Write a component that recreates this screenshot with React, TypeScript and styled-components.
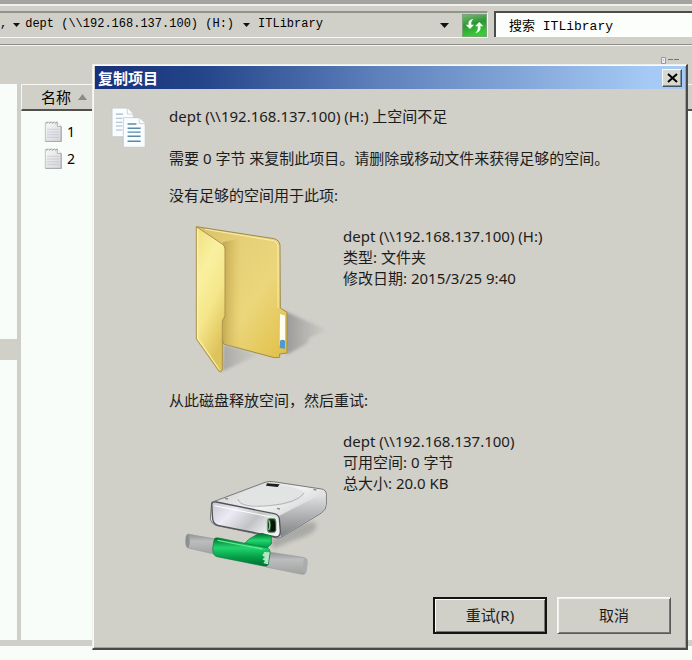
import React from "react";
import styled, { createGlobalStyle } from "styled-components";

const face = "#d0cfc8";
const paper = "#f9fdf9";
const uiFont = '"Noto Sans", "Noto Sans CJK SC", sans-serif';
const monoFont = '"Liberation Mono", "Noto Sans CJK SC", monospace';

const GlobalStyle = createGlobalStyle`
  * { box-sizing: border-box; }
  body { margin: 0; background: ${paper}; color: #1c1c1c; font-family: ${uiFont}; font-size: 15px; }
  p, h1, h2, ul { margin: 0; padding: 0; font: inherit; }
  button, input { font: inherit; color: inherit; }
`;

const Explorer = styled.div`
  position: relative;
  display: flex;
  flex-direction: column;
  min-height: 100vh;
  padding-bottom: 14px;
  overflow: hidden;
`;

const TopBar = styled.header`
  display: flex;
  gap: 6px;
  height: 46px;
  padding: 5px 0 7px;
  background: ${face};
  border-top: 4px solid #a3a3a0;
  border-bottom: 1px solid #f4f4f0;
  box-shadow: inset 0 2px #f0f0ec, inset 0 -1px #8e8e8a;
`;

const AddressBar = styled.nav`
  flex: 1 1 488px;
  display: flex;
  align-items: center;
  margin-top: 2px;
  height: 27px;
  border-top: 2px solid #92928e;
  border-bottom: 1px solid #f6f6f2;
  border-right: 1px solid #f6f6f2;
  font: 12px/20px ${monoFont};
  color: #000;
  white-space: pre;
`;

const Crumb = styled.button`
  padding: 0 0 2px;
  border: 0;
  background: none;
`;

const arrowWidths = { narrow: "18px", normal: "24px", wide: "36px" };

const ArrowButton = styled.button<{ $size: keyof typeof arrowWidths }>`
  display: flex;
  justify-content: center;
  align-items: center;
  width: ${(p) => arrowWidths[p.$size]};
  margin-left: ${(p) => (p.$size === "wide" ? "auto" : "0")};
  padding: 0;
  border: 0;
  background: none;
`;

const RefreshButton = styled.button`
  flex: none;
  display: flex;
  width: 25px;
  height: 23px;
  padding: 0;
  border: 1px solid #76a676;
  background: none;
`;

const SearchBox = styled.input`
  flex: 1 1 198px;
  min-width: 0;
  height: 26px;
  margin-top: 2px;
  padding: 0 0 2px 13px;
  border: 0;
  border-top: 2px solid #4c4c4c;
  border-left: 2px solid #4c4c4c;
  border-radius: 0;
  background: #fcfefc;
  font: 13px/22px ${monoFont};
  color: #000;
  outline: 0;
`;

const CommandBar = styled.div`
  display: flex;
  justify-content: flex-end;
  height: 38px;
  padding: 10px 12px 0 0;
  background: ${face};
`;

const Panes = styled.main`
  flex: 1;
  display: grid;
  grid-template-columns: 17px 1fr;
  gap: 4px;
  background: #cfcfca;
  border-bottom: 6px solid #cfcec8;
`;

const TreePane = styled.aside`
  background: ${paper};
`;

const TreeSelection = styled.div`
  height: 21px;
  margin-top: 255px;
  background: ${face};
`;

const ListPane = styled.section`
  background: ${paper};
`;

const ColumnHeader = styled.button`
  display: flex;
  align-items: center;
  gap: 7px;
  width: 100%;
  height: 27px;
  padding: 0 0 0 19px;
  border: 0;
  border-top: 1px solid #f6f6f2;
  border-left: 1px solid #f6f6f2;
  border-bottom: 2px solid #50504e;
  background: ${face};
  font-size: 15px;
  line-height: 22px;
  color: #000;
`;

const FileList = styled.ul`
  padding: 7px 0 0 23px;
  list-style: none;
`;

const FileRow = styled.li`
  display: flex;
  align-items: center;
  gap: 5px;
  height: 27px;
  font-size: 14px;
  line-height: 20px;
  color: #000;
`;

const Dialog = styled.section`
  position: absolute;
  top: 64px;
  left: 92px;
  right: 4px;
  border: 1px solid #efefeb;
  border-right: 2px solid #4a4a4a;
  border-bottom: 2px solid #4a4a4a;
  background: ${face};
  padding: 1px;
  box-shadow: inset 1px 1px #fafafa, inset -1px -1px #a0a09c;
`;

const TitleBar = styled.header`
  display: flex;
  align-items: center;
  justify-content: space-between;
  height: 23px;
  margin-left: 1px;
  padding: 0 3px;
  background: linear-gradient(90deg, #17307a, #24458a 18%, #5e80bb 48%, #a6caf5 94%);
  color: #fff;
`;

const Title = styled.h1`
  font-size: 15px;
  font-weight: 700;
  line-height: 22px;
`;

const CloseButton = styled.button`
  display: flex;
  align-items: center;
  justify-content: center;
  width: 20px;
  height: 18px;
  padding: 0;
  border: 1px solid;
  border-color: #f8f8f4 #43505c #43505c #f8f8f4;
  box-shadow: inset -1px -1px #85929a;
  background: #d7d8d0;
`;

const Message = styled.div`
  display: grid;
  grid-template-columns: 58px 1fr;
  padding: 17px 14px 0 17px;
  line-height: 21px;
`;

const Intro = styled.div`
  display: flex;
  flex-direction: column;
  gap: 21px;
  margin-bottom: 16px;
`;

const Item = styled.section`
  & + & { margin-top: 4px; }
`;

const ItemBody = styled.div`
  display: grid;
  grid-template-columns: 174px 1fr;
  margin-top: 10px;
`;

const Details = styled.div`
  padding-top: 10px;
`;

const Footer = styled.footer`
  display: flex;
  justify-content: flex-end;
  gap: 10px;
  padding: 6px 14px 13px;
`;

const PushButton = styled.button<{ $default?: boolean }>`
  width: 114px;
  height: 37px;
  padding: 0;
  border: ${(p) => (p.$default ? "2px solid #141414" : "1px solid")};
  ${(p) => !p.$default && "border-color: #fafaf6 #5a5a58 #5a5a58 #fafaf6;"}
  box-shadow: ${(p) => (p.$default ? "inset 1px 1px #fafaf6, inset -1px -1px #777772" : "inset 1px 1px #f0f0ec, inset -1px -1px #777772")};
  background: ${face};
  line-height: 21px;
`;

const Triangle = () => (
  <svg width="9" height="5" viewBox="0 0 9 5" aria-hidden="true"><path d="M0 0h9L4.500 5z" fill="#111" /></svg>
);

const SmallTriangle = () => (
  <svg width="7" height="4" viewBox="0 0 7 4" aria-hidden="true"><path d="M0 0h7L3.500 4z" fill="#111" /></svg>
);

const RefreshIcon = () => (
  <svg width="23" height="21" viewBox="0 0 69 63" aria-hidden="true">
    <defs>
      <linearGradient id="refresh" x2="0.300" y2="1">
        <stop stopColor="#75b873" /><stop offset=".5" stopColor="#2e9636" /><stop offset="1" stopColor="#36cb34" />
      </linearGradient>
    </defs>
    <rect width="69" height="63" fill="url(#refresh)" />
    <path d="M31 12C19 13 15 21 17 29H8l13 13 12-13h-8c-1-7 1-12 6-17z" fill="#f5fff3" />
    <path d="M37 54c12-1 18-10 15-20h9L49 21 36 34h8c2 8-1 14-7 20z" fill="#f5fff3" />
  </svg>
);

const ViewIcon = () => (
  <svg width="20" height="9" viewBox="0 0 20 9" aria-hidden="true">
    <path d="M1.500 1.500h4v6h-4zM3 4h1" fill="#e8eef0" stroke="#929da0" />
    <path d="M8 3.500h5M14 3.500h5" stroke="#737675" />
  </svg>
);

const SheetIcon = () => (
  <svg width="18" height="21" viewBox="0 0 54 63" aria-hidden="true">
    <defs><linearGradient id="sheet" x2="1" y2="1"><stop stopColor="#f8f8fa" /><stop offset="1" stopColor="#d4d5d9" /></linearGradient></defs>
    <path d="M4 4h36l11 12v45H4z" fill="url(#sheet)" stroke="#a9abae" strokeWidth="2" />
    <path d="M40 4v12h11" fill="#fff" stroke="#909294" strokeWidth="2" />
    <path d="M9 25h37M9 33h37M9 41h37M9 49h37" stroke="#bfc2ca" strokeWidth="2" />
    <path d="M7 8l5-6M16 8l5-6M25 8l5-6M34 8l5-6" stroke="#777" strokeWidth="2" />
    <path d="M52 17v45H5" fill="none" stroke="#909197" strokeWidth="2" />
  </svg>
);

const CopyIcon = () => (
  <svg width="36" height="43" viewBox="3 3 102 122" aria-hidden="true">
    <g stroke="#bbc4c8" strokeWidth="2" fill="#fafdff">
      <path d="M6 9h43l17 17v64H6z" /><path d="M49 9v17h17" />
      <path d="M38 36h45l17 17v67H38z" /><path d="M83 36v17h17" />
    </g>
    <path d="M17 26h20M17 38h18M17 49h18M17 60h18M17 71h18" stroke="#a1b5c6" strokeWidth="3" />
    <path d="M50 54h25M50 66h37M50 77h37M50 89h37M50 103h37" stroke="#5b89a9" strokeWidth="4" />
  </svg>
);

const FolderIcon = () => (
  <svg width="174" height="170" viewBox="-33 6 522 510" role="img" aria-label="文件夹">
    <defs>
      <linearGradient id="back" x1="0" x2="1" y2="1">
        <stop stopColor="#d8c068" /><stop offset=".3" stopColor="#e6cf76" /><stop offset=".6" stopColor="#ecd67c" /><stop offset="1" stopColor="#e0bf45" />
      </linearGradient>
      <linearGradient id="fold" x2="1"><stop stopColor="#9e822c" stopOpacity=".5" /><stop offset="1" stopColor="#c9ac49" stopOpacity="0" /></linearGradient>
      <linearGradient id="front" x2=".4" y2="1">
        <stop stopColor="#f1df80" /><stop offset=".35" stopColor="#f9f0a0" /><stop offset=".65" stopColor="#f5e68a" /><stop offset="1" stopColor="#dec25a" />
      </linearGradient>
      <linearGradient id="castShadow" x2="1" y2="0"><stop stopColor="#77777a" stopOpacity=".65" /><stop offset="1" stopColor="#99999a" stopOpacity=".1" /></linearGradient>
      <filter id="soft" x="-20%" y="-20%" width="140%" height="140%"><feGaussianBlur stdDeviation="5" /></filter>
    </defs>
    <path d="M312 290L440 348 388 371 380 389 320 422z" fill="url(#castShadow)" filter="url(#soft)" />
    <path d="M130 392L240 420 127 472z" fill="url(#castShadow)" opacity=".7" filter="url(#soft)" />
    <path d="M49 38L282 74q16 4 18 20l1 188 20 13v122l-22 3v10l-16 1L130 390z" fill="url(#back)" stroke="#a18c48" strokeWidth="3" />
    <path d="M76 46L280 80q12 3 14 16v186" fill="none" stroke="#f8edb1" strokeWidth="3" />
    <path d="M128 85L184 72v330l-56-14z" fill="url(#fold)" />
    <path d="M300 300l15 5v98l-16-4z" fill="#fffdf2" />
    <path d="M300 380q8-6 15 0v24l-16-2z" fill="#4f99d0" />
    <path d="M49 38L128 91q7 5 7 15v200l-8 15v140q0 18-10 11L49 375z" fill="url(#front)" stroke="#aa954c" strokeWidth="3" />
    <path d="M53 46v326l65 94" fill="none" stroke="#fff6b8" strokeWidth="3" />
  </svg>
);

const DriveIcon = () => (
  <svg width="174" height="170" viewBox="-3 -129 522 510" role="img" aria-label="网络驱动器">
    <defs>
      <linearGradient id="lid" x2="1" y2="1"><stop stopColor="#c9c9ca" /><stop offset=".45" stopColor="#f2f2f3" /><stop offset="1" stopColor="#adaeb0" /></linearGradient>
      <linearGradient id="panel" x2="1" y2=".5"><stop stopColor="#c6c6cc" /><stop offset=".35" stopColor="#ecebf5" /><stop offset=".7" stopColor="#c2c3c5" /><stop offset="1" stopColor="#f1f1f3" /></linearGradient>
      <linearGradient id="side" x2="0" y2="1"><stop stopColor="#e6e6e8" /><stop offset="1" stopColor="#7f8183" /></linearGradient>
      <linearGradient id="pipe" x2="0" y2="1"><stop stopColor="#8f9293" /><stop offset=".35" stopColor="#bcbebe" /><stop offset="1" stopColor="#a0a2a2" /></linearGradient>
      <linearGradient id="green" x2="0" y2="1"><stop stopColor="#006b2b" /><stop offset=".35" stopColor="#22d56e" /><stop offset=".65" stopColor="#06a44a" /><stop offset="1" stopColor="#006d32" /></linearGradient>
      <filter id="driveSoft" x="-30%" y="-30%" width="160%" height="160%"><feGaussianBlur stdDeviation="7" /></filter>
    </defs>
    <path d="M300 230L380 180l55-6q20 30-65 55l-60 25z" fill="#8b8c8a" opacity=".55" filter="url(#driveSoft)" />
    <path d="M125 115L285 55q12-4 25-2l145 22q14 3 14 16v30q0 16-15 26L335 219q-8 5-20 2l-174-36q-18-5-20-22z" fill="url(#lid)" stroke="#77797b" strokeWidth="3" />
    <path d="M328 155L462 86q6 2 5 12v23q0 13-12 22L333 218q-7-17-5-63z" fill="url(#side)" />
    <ellipse cx="304" cy="96" rx="99" ry="30" transform="rotate(-3 304 96)" fill="#e2e3e3" />
    <path d="M204 105q6 28 95 20 84-8 104-39" fill="none" stroke="#b0b2b3" strokeWidth="3" />
    <path d="M291 58l38 3-6 8-35-4z" fill="#1b1d1e" />
    <path d="M165 103l9 2M321 133l9 2M430 76l9 2" stroke="#898b8b" strokeWidth="4" />
    <path d="M125 119q3-7 14-5l173 35q14 3 16 15l3 38q0 17-13 17l-171-34q-17-3-19-20z" fill="url(#panel)" stroke="#515456" strokeWidth="4" />
    <path d="M133 125l170 34q16 3 18 19" fill="none" stroke="#fff" strokeWidth="3" />
    <rect x="292" y="163" width="26" height="43" rx="9" fill="#173a21" stroke="#77a777" strokeWidth="3" />
    <path d="M304 169q13 1 12 14v18h-13z" fill="#041407" /><path d="M296 169q7 14 0 29" fill="none" stroke="#8fd18c" strokeWidth="4" />
    <path d="M224 238q22-24 52-30l28 8v24l-30 28z" fill="url(#green)" stroke="#087239" strokeWidth="2" />
    <path d="M53 210L141 226v46l-86-20q-8-1-8-22 0-17 6-19z" fill="url(#pipe)" stroke="#999c9c" strokeWidth="2" />
    <path d="M292 263l112 18q8 2 8 14l-4 28q-2 9-11 8l-109-22z" fill="url(#pipe)" stroke="#999c9c" strokeWidth="2" />
    <path d="M132 228q1-9 14-6l143 29q13 2 11 18l-5 32q-2 8-15 5l-139-28q-13-3-13-25z" fill="url(#green)" stroke="#0a7a3d" strokeWidth="2" />
    <path d="M144 229l132 26" stroke="#5aec89" strokeWidth="4" strokeLinecap="round" />
    <path d="M283 264l16 1-5 36-14-3 5-8-8-4 8-7-8-4z" fill="#b9e5c5" />
    <ellipse cx="53" cy="231" rx="6" ry="20" fill="#8b8f90" /><ellipse cx="405" cy="306" rx="6" ry="23" fill="#aaadad" />
  </svg>
);

export default function App() {
  return (
    <>
      <GlobalStyle />
      <Explorer>
        <TopBar>
          <AddressBar aria-label="地址">
            <Crumb>,</Crumb>
            <ArrowButton $size="narrow" aria-label="展开"><SmallTriangle /></ArrowButton>
            <Crumb>dept (\\192.168.137.100) (H:)</Crumb>
            <ArrowButton $size="normal" aria-label="展开"><SmallTriangle /></ArrowButton>
            <Crumb>ITLibrary</Crumb>
            <ArrowButton $size="wide" aria-label="历史"><Triangle /></ArrowButton>
            <RefreshButton aria-label="刷新"><RefreshIcon /></RefreshButton>
          </AddressBar>
          <SearchBox aria-label="搜索" defaultValue="搜索 ITLibrary" />
        </TopBar>
        <CommandBar><ViewIcon /></CommandBar>
        <Panes>
          <TreePane><TreeSelection /></TreePane>
          <ListPane>
            <ColumnHeader>
              名称
              <svg width="9" height="6" viewBox="0 0 9 6" aria-hidden="true"><path d="M4.500 0L9 6H0z" fill="#8b8b88" /></svg>
            </ColumnHeader>
            <FileList>
              <FileRow><SheetIcon />1</FileRow>
              <FileRow><SheetIcon />2</FileRow>
            </FileList>
          </ListPane>
        </Panes>
        <Dialog role="dialog" aria-labelledby="dialog-title">
          <TitleBar>
            <Title id="dialog-title">复制项目</Title>
            <CloseButton aria-label="关闭">
              <svg width="11" height="10" viewBox="0 0 11 10" aria-hidden="true"><path d="M1 1l9 8M10 1L1 9" stroke="#000" strokeWidth="2" /></svg>
            </CloseButton>
          </TitleBar>
          <Message>
            <CopyIcon />
            <div>
              <Intro>
                <p>dept (\\192.168.137.100) (H:) 上空间不足</p>
                <p>需要 0 字节 来复制此项目。请删除或移动文件来获得足够的空间。</p>
              </Intro>
              <Item>
                <h2>没有足够的空间用于此项:</h2>
                <ItemBody>
                  <FolderIcon />
                  <Details>
                    <p>dept (\\192.168.137.100) (H:)</p>
                    <p>类型: 文件夹</p>
                    <p>修改日期: 2015/3/25 9:40</p>
                  </Details>
                </ItemBody>
              </Item>
              <Item>
                <h2>从此磁盘释放空间，然后重试:</h2>
                <ItemBody>
                  <DriveIcon />
                  <Details>
                    <p>dept (\\192.168.137.100)</p>
                    <p>可用空间: 0 字节</p>
                    <p>总大小: 20.0 KB</p>
                  </Details>
                </ItemBody>
              </Item>
            </div>
          </Message>
          <Footer>
            <PushButton $default>重试(R)</PushButton>
            <PushButton>取消</PushButton>
          </Footer>
        </Dialog>
      </Explorer>
    </>
  );
}
